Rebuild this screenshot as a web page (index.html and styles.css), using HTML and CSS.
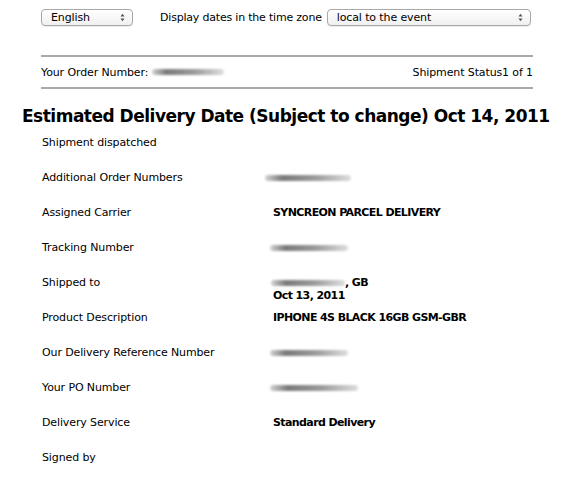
FILE: index.html
```html
<!DOCTYPE html>
<html>
<head>
<meta charset="utf-8">
<link rel="stylesheet" href="styles.css">
</head>
<body>
<div class="page">
  <div class="toolbar">
    <div class="select sel-lang"><span>English</span><svg class="arrows" width="5" height="9" viewBox="0 0 5 9"><path d="M0.5 3.5 L2.5 0.8 L4.5 3.5 Z M0.5 5.5 L2.5 8.2 L4.5 5.5 Z" fill="#555"/></svg></div>
    <span class="tz-label">Display dates in the time zone</span>
    <div class="select sel-tz"><span>local to the event</span><svg class="arrows" width="5" height="9" viewBox="0 0 5 9"><path d="M0.5 3.5 L2.5 0.8 L4.5 3.5 Z M0.5 5.5 L2.5 8.2 L4.5 5.5 Z" fill="#555"/></svg></div>
  </div>
  <div class="orderbar">
    <div class="order-left">Your Order Number: <span class="blur b-order"></span></div>
    <div class="order-right">Shipment Status1 of 1</div>
  </div>
  <h1 class="title">Estimated Delivery Date (Subject to change) Oct 14, 2011</h1>
  <div class="details">
    <div class="label">Shipment dispatched</div><div class="value"></div>
    <div class="label">Additional Order Numbers</div><div class="value"><span class="blur b-add"></span></div>
    <div class="label">Assigned Carrier</div><div class="value">SYNCREON PARCEL DELIVERY</div>
    <div class="label">Tracking Number</div><div class="value"><span class="blur b-track"></span></div>
    <div class="label">Shipped to</div><div class="value"><span class="blur b-ship"></span>, GB<br>Oct 13, 2011</div>
    <div class="label">Product Description</div><div class="value">IPHONE 4S BLACK 16GB GSM-GBR</div>
    <div class="label">Our Delivery Reference Number</div><div class="value"><span class="blur b-track"></span></div>
    <div class="label">Your PO Number</div><div class="value"><span class="blur b-po"></span></div>
    <div class="label">Delivery Service</div><div class="value">Standard Delivery</div>
    <div class="label">Signed by</div><div class="value"></div>
  </div>
</div>
</body>
</html>
```
FILE: styles.css
```css
html, body { margin: 0; padding: 0; background: #fff; }
body { font-family: "DejaVu Sans", Verdana, sans-serif; font-size: 11px; color: #000; letter-spacing: -0.12px; }
.page { width: 564px; height: 478px; overflow: hidden; }
.toolbar { display: flex; align-items: center; padding: 9px 0 0 41px; height: 17px; }
.select {
  height: 15px; border: 1px solid #a8a8a8; border-radius: 4px;
  background: linear-gradient(#fff, #f0f0f0);
  display: flex; align-items: center; justify-content: space-between;
  padding: 0 7px 0 9px; box-sizing: content-box; font-size: 11px;
  box-shadow: 0 1px 1px rgba(0,0,0,0.08);
}
.sel-lang { width: 74px; }
.sel-tz { width: 186px; }
.arrows { display: block; flex: none; }
.tz-label { margin: 0 5px 0 27px; letter-spacing: -0.2px; }
.orderbar {
  margin: 29px 31px 0 41px; border-top: 2px solid #a9a9a9; border-bottom: 2px solid #a9a9a9;
  height: 30px; display: flex; justify-content: space-between; align-items: center;
  box-sizing: content-box;
}
.order-left { display: flex; align-items: center; }
.blur {
  display: inline-block; height: 6px; border-radius: 3px;
  background: linear-gradient(90deg, rgba(130,130,130,0.35), #7a7a7a 20%, #9d9d9d 60%, rgba(160,160,160,0.35));
  filter: blur(1px); vertical-align: middle;
}
.b-order { width: 72px; margin-left: 4px; }
.b-add { width: 86px; margin-left: -8px; }
.b-track { width: 78px; margin-left: -3px; }
.b-ship { width: 74px; margin-left: -2px; }
.b-po { width: 88px; margin-left: -3px; }
.title {
  font-family: "DejaVu Sans", Verdana, sans-serif; font-weight: bold; font-size: 17px;
  margin: 15px 0 0 22px; line-height: 24px; white-space: nowrap; letter-spacing: -0.5px;
}
.details {
  display: grid; grid-template-columns: 231px 1fr; grid-auto-rows: 35px;
  margin: 0 0 0 42px;
}
.label, .value { line-height: 13px; padding-top: 8px; }
.value { font-weight: bold; letter-spacing: -0.6px; }
```
